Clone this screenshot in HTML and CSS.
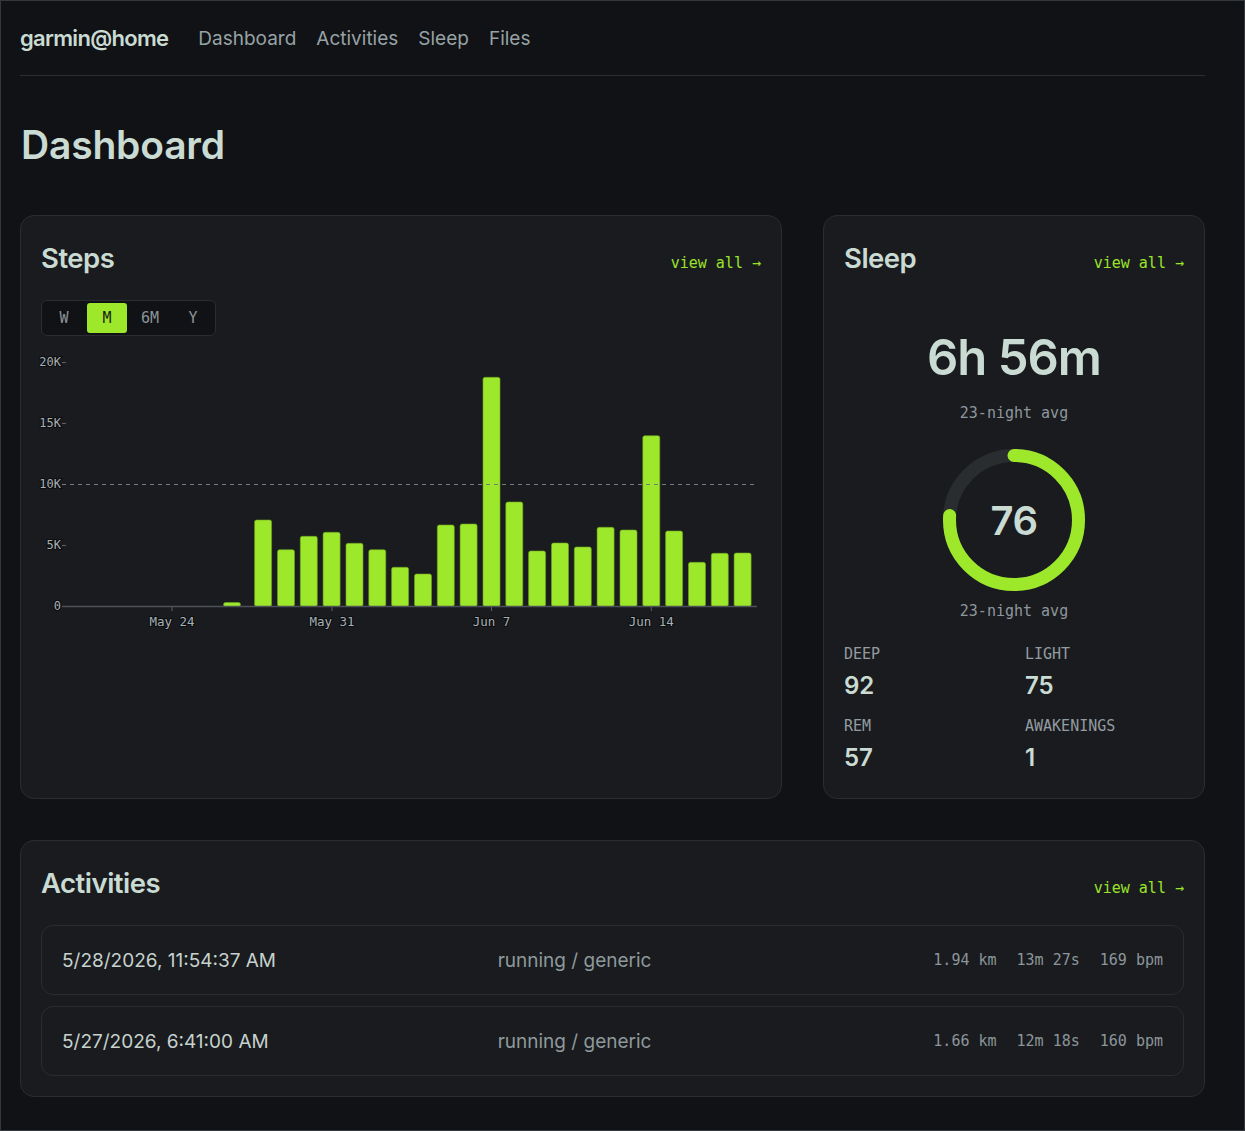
FILE: index.html
```html
<!DOCTYPE html>
<html lang="en">
<head>
<meta charset="utf-8">
<title>garmin@home — Dashboard</title>
<link rel="stylesheet" href="styles.css">
</head>
<body>
<div class="page">
  <header class="topbar">
    <a class="brand" href="#">garmin@home</a>
    <nav class="nav">
      <a href="#">Dashboard</a>
      <a href="#">Activities</a>
      <a href="#">Sleep</a>
      <a href="#">Files</a>
    </nav>
  </header>

  <h1 class="page-title">Dashboard</h1>

  <div class="grid">
    <section class="card steps">
      <div class="card-head">
        <h2>Steps</h2>
        <a class="more" href="#">view all →</a>
      </div>
      <div class="seg">
        <button>W</button>
        <button class="on">M</button>
        <button>6M</button>
        <button>Y</button>
      </div>
      <svg class="chart" width="740" height="290" viewBox="-20 0 740 290">
        <g class="ylab">
          <text x="20" y="19.5">20K</text>
          <text x="20" y="80.5">15K</text>
          <text x="20" y="141.5">10K</text>
          <text x="20" y="202.5">5K</text>
          <text x="20" y="263.5">0</text>
        </g>
        <g class="ytick">
          <line x1="21" x2="25" y1="16.5" y2="16.5"/>
          <line x1="21" x2="25" y1="77.5" y2="77.5"/>
          <line x1="21" x2="25" y1="138.5" y2="138.5"/>
          <line x1="21" x2="25" y1="199.5" y2="199.5"/>
        </g>
        <g class="bars">
          <rect x="182.5" y="256.5" width="17" height="4" rx="2"/>
          <rect x="213.6" y="174" width="17" height="86.5" rx="2"/>
          <rect x="236.5" y="203.7" width="17" height="56.8" rx="2"/>
          <rect x="259.3" y="190.3" width="17" height="70.2" rx="2"/>
          <rect x="282.1" y="186.3" width="17" height="74.2" rx="2"/>
          <rect x="305" y="197.3" width="17" height="63.2" rx="2"/>
          <rect x="327.8" y="203.7" width="17" height="56.8" rx="2"/>
          <rect x="350.6" y="221.3" width="17" height="39.2" rx="2"/>
          <rect x="373.5" y="228" width="17" height="32.5" rx="2"/>
          <rect x="396.3" y="179" width="17" height="81.5" rx="2"/>
          <rect x="419.1" y="178" width="17" height="82.5" rx="2"/>
          <rect x="442" y="31.3" width="17" height="229.2" rx="2"/>
          <rect x="464.8" y="156" width="17" height="104.5" rx="2"/>
          <rect x="487.6" y="205" width="17" height="55.5" rx="2"/>
          <rect x="510.5" y="197" width="17" height="63.5" rx="2"/>
          <rect x="533.3" y="201" width="17" height="59.5" rx="2"/>
          <rect x="556.1" y="181.3" width="17" height="79.2" rx="2"/>
          <rect x="579" y="184" width="17" height="76.5" rx="2"/>
          <rect x="601.8" y="89.7" width="17" height="170.8" rx="2"/>
          <rect x="624.6" y="185" width="17" height="75.5" rx="2"/>
          <rect x="647.5" y="216.3" width="17" height="44.2" rx="2"/>
          <rect x="670.3" y="207.3" width="17" height="53.2" rx="2"/>
          <rect x="693.1" y="207" width="17" height="53.5" rx="2"/>
        </g>
        <line class="goal" x1="21" x2="714" y1="138.5" y2="138.5"/>
        <line class="axis" x1="21" x2="716" y1="260.5" y2="260.5"/>
        <g class="xtick">
          <line x1="131" x2="131" y1="261" y2="265"/>
          <line x1="291" x2="291" y1="261" y2="265"/>
          <line x1="450.5" x2="450.5" y1="261" y2="265"/>
          <line x1="610.3" x2="610.3" y1="261" y2="265"/>
        </g>
        <g class="xlab">
          <text x="131" y="279.5">May 24</text>
          <text x="291" y="279.5">May 31</text>
          <text x="450.5" y="279.5">Jun 7</text>
          <text x="610.3" y="279.5">Jun 14</text>
        </g>
      </svg>
    </section>

    <section class="card sleep">
      <div class="card-head">
        <h2>Sleep</h2>
        <a class="more" href="#">view all →</a>
      </div>
      <div class="duration">6h 56m</div>
      <div class="note">23-night avg</div>
      <div class="ring">
        <svg width="144" height="144" viewBox="0 0 144 144">
          <circle class="track" cx="72" cy="72" r="64.5"/>
          <circle class="fill" cx="72" cy="72" r="64.5" stroke-dasharray="308 405.3" transform="rotate(-90 72 72)"/>
        </svg>
        <span class="score">76</span>
      </div>
      <div class="note">23-night avg</div>
      <dl class="stats">
        <div><dt>Deep</dt><dd>92</dd></div>
        <div><dt>Light</dt><dd>75</dd></div>
        <div><dt>REM</dt><dd>57</dd></div>
        <div><dt>Awakenings</dt><dd>1</dd></div>
      </dl>
    </section>

    <section class="card activities">
      <div class="card-head">
        <h2>Activities</h2>
        <a class="more" href="#">view all →</a>
      </div>
      <ul class="list">
        <li class="row">
          <span class="when">5/28/2026, 11:54:37 AM</span>
          <span class="kind">running / generic</span>
          <span class="metrics"><span>1.94 km</span><span>13m 27s</span><span>169 bpm</span></span>
        </li>
        <li class="row">
          <span class="when">5/27/2026, 6:41:00 AM</span>
          <span class="kind">running / generic</span>
          <span class="metrics"><span>1.66 km</span><span>12m 18s</span><span>160 bpm</span></span>
        </li>
      </ul>
    </section>
  </div>
</div>
</body>
</html>
```

FILE: styles.css
```css
* { box-sizing: border-box; }

html, body {
  margin: 0;
  background: #111215;
}

body {
  min-height: 100vh;
  border: 1px solid #34373c;
  font-family: Inter, "Noto Sans", sans-serif;
  color: #c9dbd2;
}

a { text-decoration: none; color: inherit; }

.page {
  width: 1185px;
  margin-left: 19px;
}

/* top navigation */
.topbar {
  height: 75px;
  display: flex;
  align-items: center;
  gap: 30px;
  border-bottom: 1px solid #2c2f33;
}

.brand {
  font-size: 22px;
  font-weight: 600;
  letter-spacing: -0.7px;
  color: #c9dbd2;
}

.nav {
  display: flex;
  gap: 20px;
  font-size: 19px;
  padding-top: 1px;
}

.nav a { color: #97a2a5; }

.page-title {
  margin: 45px 0 46px 1px;
  font-size: 39px;
  line-height: 48px;
  font-weight: 600;
  color: #c9dbd2;
  letter-spacing: -0.2px;
}

/* cards */
.grid {
  display: grid;
  grid-template-columns: 762px 382px;
  column-gap: 41px;
  row-gap: 41px;
}

.card {
  background: #1a1b1f;
  border: 1px solid #2a2c31;
  border-radius: 14px;
  padding: 20px;
}

.card-head {
  display: flex;
  justify-content: space-between;
  align-items: baseline;
  height: 44px;
}

.card-head h2 {
  margin: 0;
  font-size: 27.5px;
  line-height: 44px;
  font-weight: 600;
  letter-spacing: -0.5px;
  color: #c9dbd2;
}

.more {
  font-family: "DejaVu Sans Mono", "Liberation Mono", monospace;
  font-size: 15px;
  color: #9be42a;
}

/* range switch */
.seg {
  display: inline-flex;
  gap: 3px;
  margin-top: 20px;
  padding: 2px;
  background: #111215;
  border: 1px solid #2a2c31;
  border-radius: 6px;
}

.seg button {
  width: 40px;
  height: 30px;
  border: 0;
  border-radius: 3px;
  background: transparent;
  font-family: "DejaVu Sans Mono", "Liberation Mono", monospace;
  font-size: 15px;
  color: #8b9499;
  padding: 0;
}

.seg button.on {
  background: #9de82a;
  color: #1a1d12;
}

/* steps chart: the svg reaches 20px into the card padding for the y labels */
.chart {
  display: block;
  margin-top: 10px;
  margin-left: -20px;
}

.chart text {
  font-family: "DejaVu Sans Mono", "Liberation Mono", monospace;
  font-size: 12px;
  fill: #a7b0b5;
  stroke: #0c0d0f;
  stroke-width: 2px;
  paint-order: stroke;
}

.ylab text { text-anchor: end; }
.xlab text { text-anchor: middle; font-size: 12.5px; }

.ytick line, .xtick line {
  stroke: #5b6166;
  stroke-width: 1;
}

.bars rect {
  fill: #9de82a;
  stroke: #6fa61e;
  stroke-width: 0.6;
}

.goal {
  stroke: #737c82;
  stroke-width: 1;
  stroke-dasharray: 4 4;
}

.axis {
  stroke: #4d5257;
  stroke-width: 1.5;
}

/* sleep summary */
.sleep {
  display: flex;
  flex-direction: column;
  align-items: center;
  padding-bottom: 24px;
}

.sleep .card-head { align-self: stretch; }

.duration {
  margin-top: 48px;
  font-size: 49px;
  line-height: 60px;
  font-weight: 600;
  letter-spacing: -1px;
  color: #c9dbd2;
}

.note {
  font-family: "DejaVu Sans Mono", "Liberation Mono", monospace;
  font-size: 15px;
  line-height: 20px;
  color: #8e979c;
  margin-top: 15px;
}

.ring {
  position: relative;
  width: 144px;
  height: 144px;
  margin-top: 25px;
  margin-bottom: -6px;
}

.ring svg { display: block; }

.ring circle {
  fill: none;
  stroke-width: 13;
}

.ring .track { stroke: #2a2d30; }

.ring .fill {
  stroke: #9de82a;
  stroke-linecap: round;
}

.score {
  position: absolute;
  inset: 0;
  display: flex;
  align-items: center;
  justify-content: center;
  font-size: 40px;
  font-weight: 600;
  color: #c9dbd2;
  letter-spacing: -0.5px;
}

.stats {
  align-self: stretch;
  margin: 23px 0 0;
  display: grid;
  grid-template-columns: 1fr 1fr;
  column-gap: 22px;
  row-gap: 14px;
}

.stats dt {
  font-family: "DejaVu Sans Mono", "Liberation Mono", monospace;
  font-size: 15px;
  line-height: 20px;
  text-transform: uppercase;
  color: #939ca1;
}

.stats dd {
  margin: 6px 0 0;
  font-size: 24px;
  line-height: 32px;
  font-weight: 600;
  color: #c9dbd2;
}

/* activity list */
.activities { grid-column: 1 / -1; }

.list {
  list-style: none;
  margin: 20px 0 0;
  padding: 0;
  display: flex;
  flex-direction: column;
  gap: 11px;
}

.row {
  height: 70px;
  display: grid;
  grid-template-columns: 1fr 1fr auto;
  align-items: center;
  padding: 0 20px;
  border: 1px solid #2a2c31;
  border-radius: 12px;
}

.when {
  font-size: 19px;
  color: #c5d2cd;
}

.kind {
  font-size: 19px;
  color: #8d999b;
}

.metrics {
  display: flex;
  gap: 20px;
  font-family: "DejaVu Sans Mono", "Liberation Mono", monospace;
  font-size: 15px;
  color: #8b959a;
}
```
